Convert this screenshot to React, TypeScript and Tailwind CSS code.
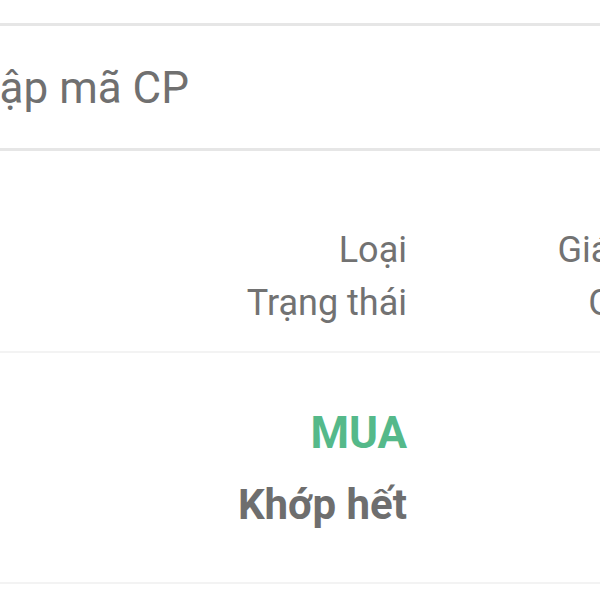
import React from "react";

const font = { fontFamily: "Roboto, 'Noto Sans', sans-serif" };

export default function App() {
  return (
    <div className="w-[600px] h-[600px] overflow-hidden bg-white whitespace-nowrap" style={font}>
      {/* search box */}
      <div className="pt-[23px]">
        <div className="h-[128px] border-y-[3px] border-[#e6e6e6] flex items-center">
          <input
            className="ml-[-56px] w-[700px] shrink-0 bg-transparent outline-none text-[44px] leading-[50px] text-[#707070] placeholder:text-[#707070] pt-[1px]"
            placeholder="Nhập mã CP"
          />
        </div>
      </div>

      {/* header */}
      <div className="pt-[73px] pb-[21px] border-b-2 border-[#f3f3f3] flex text-[36px] leading-[53px] text-[#727272]">
        <div className="w-[407px] shrink-0 flex flex-col items-end">
          <span>Loại</span>
          <span>Trạng thái</span>
        </div>
        <div className="ml-[153px] w-[169px] shrink-0 flex flex-col items-end">
          <span>Giá đặt/KL</span>
          <span>Giá khớp</span>
        </div>
      </div>

      {/* order row */}
      <div className="pt-[50px] pb-[47px] border-b-2 border-[#f3f3f3] flex">
        <div className="w-[407px] shrink-0 flex flex-col items-end font-bold">
          <span className="text-[44px] leading-[60px] text-[#55b98a]">MUA</span>
          <span className="mt-[12px] text-[42px] leading-[60px] text-[#6e6e6e]">Khớp hết</span>
        </div>
      </div>
    </div>
  );
}
